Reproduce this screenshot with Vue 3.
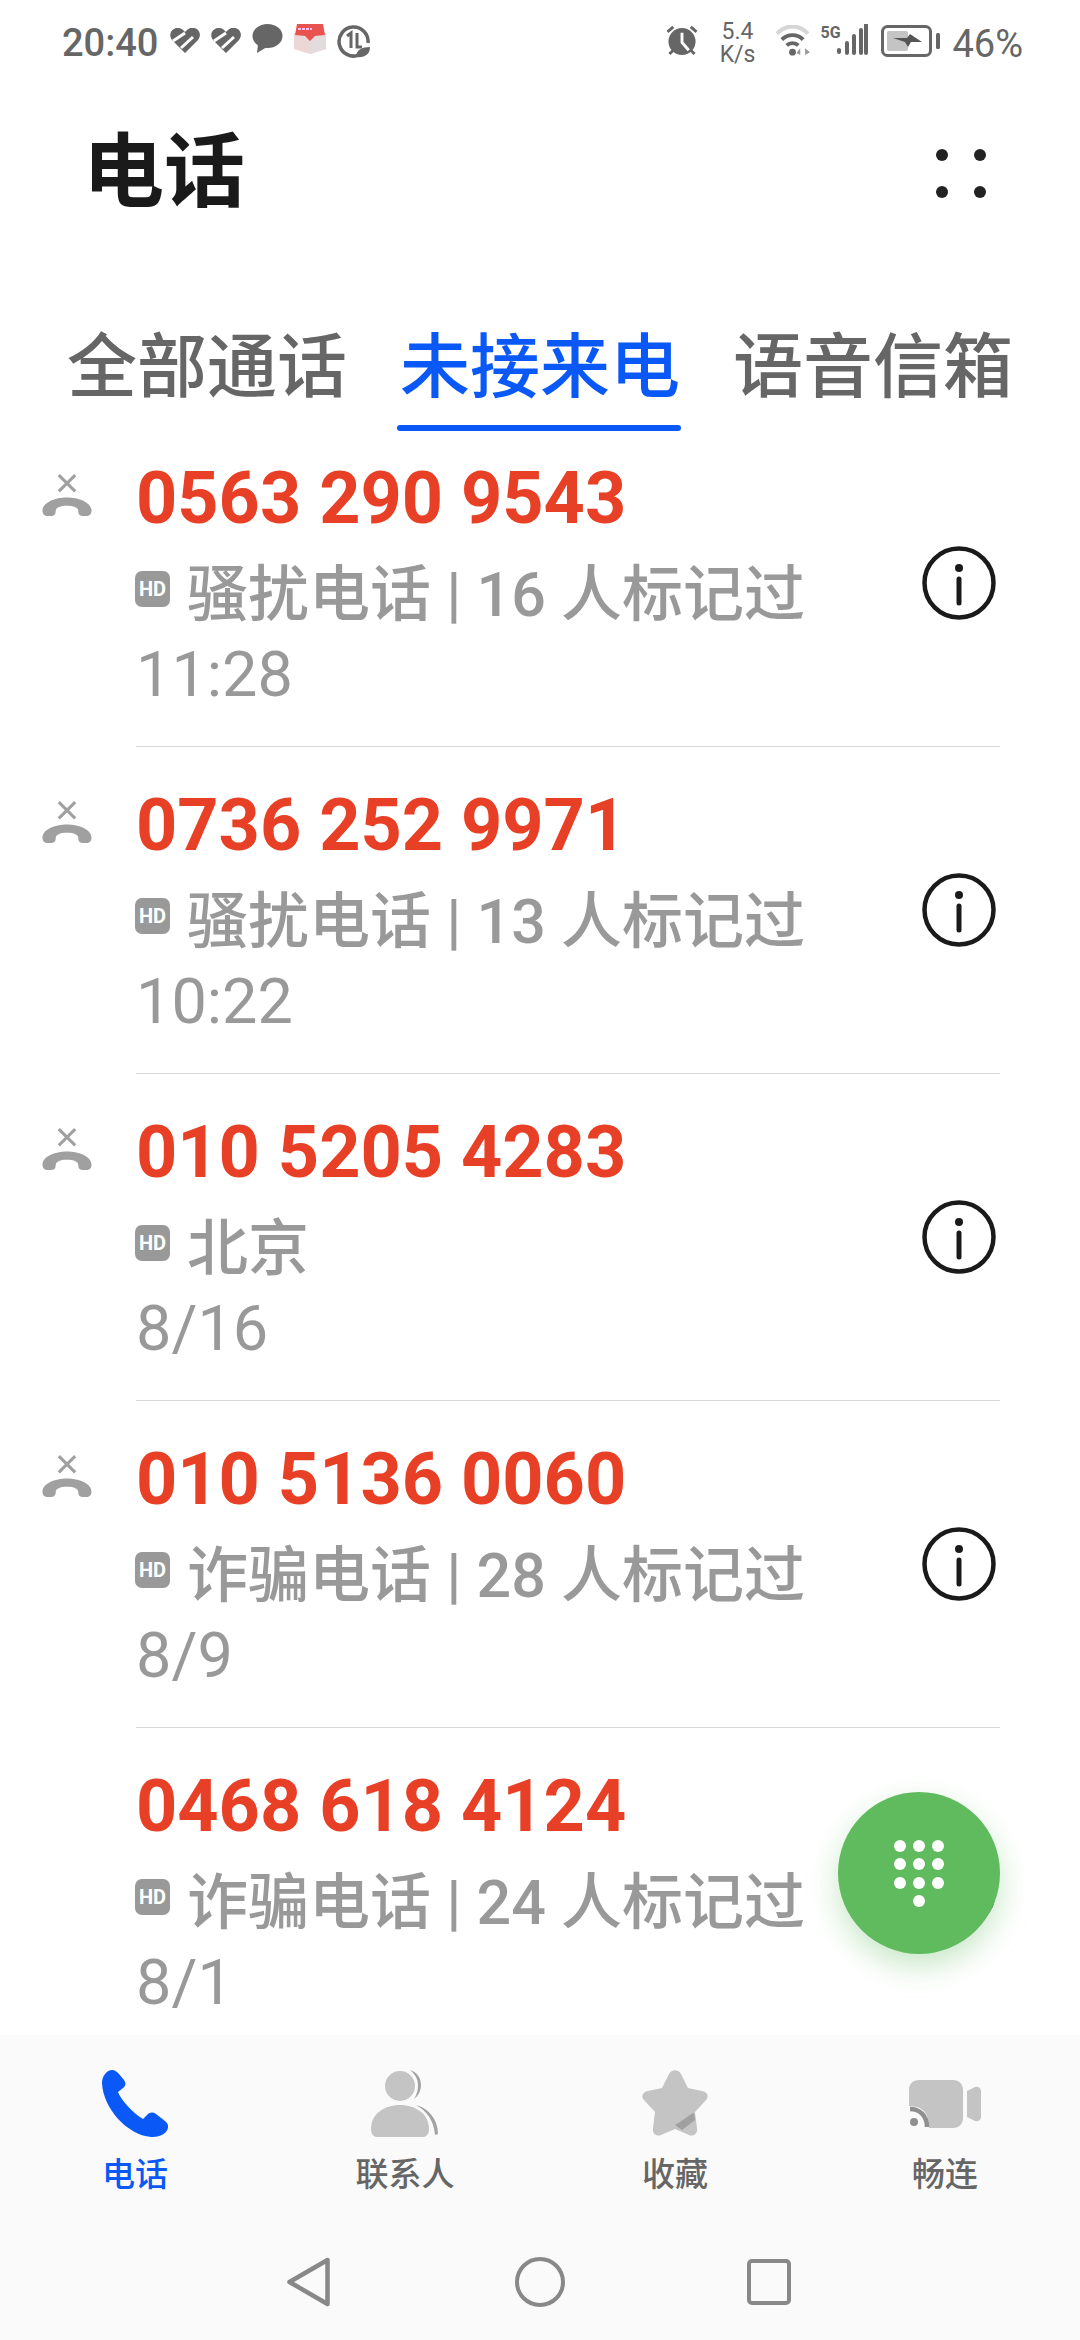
<script setup>
const tabs = [
  { label: '全部通话' },
  { label: '未接来电', active: true },
  { label: '语音信箱' }
]

const calls = [
  { number: '0563 290 9543', tag: '骚扰电话 | 16 人标记过', time: '11:28', missed: true },
  { number: '0736 252 9971', tag: '骚扰电话 | 13 人标记过', time: '10:22', missed: true },
  { number: '010 5205 4283', tag: '北京', time: '8/16', missed: true },
  { number: '010 5136 0060', tag: '诈骗电话 | 28 人标记过', time: '8/9', missed: true },
  { number: '0468 618 4124', tag: '诈骗电话 | 24 人标记过', time: '8/1', missed: false }
]

const padDots = [
  [6, 6], [25, 6], [44, 6],
  [6, 24], [25, 24], [44, 24],
  [6, 43], [25, 43], [44, 43],
  [25, 61]
]
</script>

<template>
  <div class="page">
    <div class="status">
      <div class="status-left">
        <span class="clock">20:40</span>
        <svg class="s-heart" width="30" height="25" viewBox="0 0 30 25">
          <path d="M15 25 2 12C-1 8 0 3 4 1 7-1 11 0 13 2L15 4 17 2C20-1 25-1 28 2 31 6 30 9 28 12Z" fill="#666" />
          <path d="M3 13 15 5M11 20 23 9" stroke="#fff" stroke-width="3" fill="none" />
        </svg>
        <svg class="s-heart" width="30" height="25" viewBox="0 0 30 25">
          <path d="M15 25 2 12C-1 8 0 3 4 1 7-1 11 0 13 2L15 4 17 2C20-1 25-1 28 2 31 6 30 9 28 12Z" fill="#666" />
          <path d="M3 13 15 5M11 20 23 9" stroke="#fff" stroke-width="3" fill="none" />
        </svg>
        <svg width="31" height="29" viewBox="0 0 31 29">
          <ellipse cx="15.5" cy="12" rx="15" ry="12" fill="#666" />
          <path d="M6 20 5 29 15 23Z" fill="#666" />
        </svg>
        <svg width="32" height="30" viewBox="0 0 32 30">
          <path d="M0 9 16 14 32 9V25L16 30 0 25Z" fill="#ecd6d6" />
          <path d="M16 14 32 9V25L16 30Z" fill="#e2dcdc" />
          <path d="M3 0H29L31 11 21 12 16 17 11 12 1 11Z" fill="#e8534f" />
          <path d="M4 5H18" stroke="#fbe" stroke-width="2" stroke-dasharray="3 1" />
        </svg>
        <svg width="33" height="34" viewBox="0 0 33 34">
          <path d="M22 31A14.5 14.5 0 1 1 31 19" fill="none" stroke="#666" stroke-width="3.5" />
          <path d="M10 12 14 9V24M20 9V23H25" fill="none" stroke="#666" stroke-width="3" />
          <path d="M19 33C19 26 25 23 33 23 33 30 28 34 19 33Z" fill="#666" />
        </svg>
      </div>
      <div class="status-right">
        <svg class="s-alarm" width="34" height="31" viewBox="0 0 34 32">
          <circle cx="17" cy="17" r="14" fill="#666" />
          <path d="M17 8V18L24 26" fill="none" stroke="#fff" stroke-width="3" />
          <path d="M2 7 8 2M32 7 26 2M4 30 8 26M30 30 26 26" stroke="#666" stroke-width="3" fill="none" />
        </svg>
        <div class="speed"><span>5.4</span><span>K/s</span></div>
        <svg class="s-wifi" width="37" height="31" viewBox="0 0 36 32">
          <path d="M2 9C11-1 25-1 34 9" fill="none" stroke="#d6d6d6" stroke-width="4" />
          <path d="M7 15C13 9 23 9 29 15M12 21C15 18 21 18 24 21" fill="none" stroke="#666" stroke-width="4" />
          <circle cx="18" cy="28" r="3.5" fill="#666" />
          <path d="M26 24 26 31 22 29ZM31 24 31 31 36 28Z" fill="#999" />
        </svg>
        <div class="signal">
          <span class="fiveg">5G</span>
          <svg width="32" height="31" viewBox="0 0 32 31">
            <path d="M3 26V28M11 19V29M18 12V29M25 6V29M30 1V29" stroke="#666" stroke-width="4" stroke-linecap="round" fill="none" />
          </svg>
        </div>
        <svg class="s-battery" width="59" height="32" viewBox="0 0 59 32">
          <rect x="1.5" y="1.5" width="48" height="29" rx="5" fill="none" stroke="#666" stroke-width="3" />
          <rect x="6" y="6" width="21" height="20" rx="2" fill="#c4c4c4" />
          <path d="M12 13H26L29 9 41 17H30L27 22 24 17Z" fill="#555" />
          <rect x="55" y="8" width="4" height="16" rx="1.5" fill="#666" />
        </svg>
        <span class="percent">46%</span>
      </div>
    </div>

    <div class="header">
      <h1 class="title">电话</h1>
      <div class="more">
        <i></i><i></i><i></i><i></i>
      </div>
    </div>

    <div class="tabs">
      <div v-for="tab in tabs" :key="tab.label" class="tab" :class="{ active: tab.active }">
        {{ tab.label }}
      </div>
    </div>

    <div class="list">
      <div v-for="call in calls" :key="call.number" class="row">
        <div class="missed">
          <svg v-if="call.missed" width="52" height="45" viewBox="0 0 50 44">
            <path d="M17 2 33 18M33 2 17 18" stroke="#a0a0a0" stroke-width="3" fill="none" />
            <path d="M1 37C1 29 13 24 25 24 37 24 49 29 49 37 49 40 47 42 45 42H40C37 42 36 40 36 37 36 34 32 32 25 32 18 32 14 34 14 37 14 40 13 42 10 42H5C3 42 1 40 1 37Z" fill="#a0a0a0" />
          </svg>
        </div>
        <div class="row-main">
          <div class="row-text">
            <div class="number">{{ call.number }}</div>
            <div class="tag">
              <span class="hd">HD</span>
              <span>{{ call.tag }}</span>
            </div>
            <div class="time">{{ call.time }}</div>
          </div>
          <svg class="info" width="80" height="80" viewBox="0 0 80 80">
            <circle cx="40" cy="40" r="34.5" fill="none" stroke="#1a1a1a" stroke-width="4.5" />
            <circle cx="40" cy="25" r="4" fill="#1a1a1a" />
            <path d="M40 36V60" stroke="#1a1a1a" stroke-width="5" stroke-linecap="round" />
          </svg>
        </div>
      </div>
    </div>

    <div class="fab">
      <svg width="50" height="67" viewBox="0 0 50 67">
        <circle v-for="(d, i) in padDots" :key="i" :cx="d[0]" :cy="d[1]" r="6" fill="#fff" />
      </svg>
    </div>

    <div class="bottom">
      <div class="nav">
        <div class="nav-item active">
          <svg width="66" height="67" viewBox="0 0 66 67">
            <path d="M0 13C0 6 5 0 10 0 13 0 15 2 17 4L22 10C24 13 24 16 21 18L16 22C19 30 31 43 41 49L45 45C48 42 51 42 54 44L63 51C67 54 67 58 64 62 60 66 55 67 49 67 25 65 1 38 0 13Z" fill="#0a59f7" />
          </svg>
          <span>电话</span>
        </div>
        <div class="nav-item">
          <svg width="68" height="67" viewBox="0 0 68 67">
            <path d="M39 0C46 2 50 8 50 15 50 21 47 26 43 29 46 24 47 20 47 15 47 9 44 4 39 0ZM45 35C57 38 67 49 67 64L64 65C63 51 56 41 45 35Z" fill="#a3a3a3" />
            <circle cx="29" cy="16" r="15" fill="#c4c4c4" />
            <path d="M0 59C0 44 13 35 29 35 45 35 58 44 58 59 58 63 56 67 52 67H6C2 67 0 63 0 59Z" fill="#c4c4c4" />
          </svg>
          <span>联系人</span>
        </div>
        <div class="nav-item">
          <svg width="66" height="67" viewBox="0 0 66 67">
            <path d="M27 4C30-1 36-1 39 4L46 18 60 21C66 22 67 27 64 30L53 42 55 58C56 64 51 67 47 65L33 59 19 65C15 67 10 64 11 58L13 42 2 30C-1 27 0 22 6 21L20 18Z" fill="#c4c4c4" />
            <path d="M33 55C42 50 48 44 52 43L53 50 40 60Z" fill="#a0a0a0" />
          </svg>
          <span>收藏</span>
        </div>
        <div class="nav-item">
          <svg class="nav-video" width="74" height="48" viewBox="0 0 72 48">
            <path d="M10 0H44C50 0 54 4 54 10V38C54 44 50 48 44 48H20C20 32 14 27 0 26V10C0 4 4 0 10 0Z" fill="#c4c4c4" />
            <path d="M58 11 66 7C69 6 72 8 72 11V37C72 40 69 42 66 41L58 37Z" fill="#c4c4c4" />
            <circle cx="5" cy="42" r="4" fill="#8f8f8f" />
            <path d="M1 29C11 29 18 36 18 47" fill="none" stroke="#8f8f8f" stroke-width="4.5" />
          </svg>
          <span>畅连</span>
        </div>
      </div>
      <div class="keys">
        <svg class="key-back" width="45" height="50" viewBox="0 0 44 50">
          <path d="M41 3V47L3 25Z" fill="none" stroke="#888" stroke-width="4.5" stroke-linejoin="round" />
        </svg>
        <svg class="key-home" width="50" height="50" viewBox="0 0 50 50">
          <circle cx="25" cy="25" r="23" fill="none" stroke="#888" stroke-width="4" />
        </svg>
        <svg class="key-recent" width="44" height="46" viewBox="0 0 44 46">
          <rect x="2" y="2" width="40" height="42" rx="3" fill="none" stroke="#888" stroke-width="4" />
        </svg>
      </div>
    </div>
  </div>
</template>

<style>
html,
body {
  margin: 0;
  background: #fff;
}
</style>

<style scoped>
.page {
  position: relative;
  width: 1080px;
  height: 2340px;
  display: flex;
  flex-direction: column;
  overflow: hidden;
  background: #fff;
  font-family: Roboto, "Noto Sans CJK SC", sans-serif;
}

.status {
  height: 80px;
  flex: none;
  display: flex;
  justify-content: space-between;
  padding: 24px 57px 0 62px;
  box-sizing: border-box;
  color: #666;
}

.status-left {
  display: flex;
  align-items: flex-start;
  gap: 11px;
}

.clock {
  font-size: 38px;
  line-height: 36px;
  margin: 1px 1px 0 0;
  font-weight: 500;
}

.s-heart {
  margin-top: 4px;
}

.status-right {
  display: flex;
  align-items: flex-start;
}

.s-alarm {
  margin: 1px 21px 0 0;
}

.speed {
  display: flex;
  flex-direction: column;
  align-items: center;
  font-size: 23px;
  line-height: 23px;
  margin: -4px 19px 0 0;
}

.s-wifi {
  margin: 1px 9px 0 0;
}

.signal {
  display: flex;
  align-items: flex-start;
  margin-right: 13px;
}

.fiveg {
  font-size: 16px;
  line-height: 18px;
  font-weight: 700;
  width: 16px;
}

.s-battery {
  margin: 1px 12px 0 0;
}

.percent {
  font-size: 38px;
  line-height: 36px;
  margin-top: 2px;
}

.header {
  height: 180px;
  flex: none;
  display: flex;
  align-items: center;
  justify-content: space-between;
  padding: 0 94px 0 83px;
  margin-top: 3px;
  box-sizing: border-box;
}

.title {
  margin: 0;
  font-size: 81px;
  line-height: 100px;
  font-weight: 700;
  color: #1a1a1a;
}

.more {
  width: 50px;
  display: grid;
  grid-template-columns: 12px 12px;
  justify-content: space-between;
  row-gap: 25px;
}

.more i {
  width: 12px;
  height: 12px;
  border-radius: 50%;
  background: #222;
}

.tabs {
  height: 157px;
  flex: none;
  display: flex;
  align-items: center;
  padding: 52px 0 0 67px;
  gap: 53px;
  box-sizing: border-box;
}

.tab {
  position: relative;
  font-size: 70px;
  line-height: 90px;
  font-weight: 500;
  color: #666;
}

.tab.active {
  color: #0a59f7;
}

.tab.active::after {
  content: "";
  position: absolute;
  left: -3px;
  right: -1px;
  bottom: -18px;
  height: 6px;
  border-radius: 3px;
  background: #0a59f7;
}

.list {
  flex: 1;
  min-height: 0;
  overflow: hidden;
}

.row {
  display: flex;
  height: 327px;
}

.missed {
  width: 137px;
  flex: none;
  display: flex;
  justify-content: center;
  box-sizing: border-box;
  padding: 53px 4px 0 0;
  margin-right: -1px;
}

.row-main {
  width: 864px;
  display: flex;
  align-items: center;
  justify-content: space-between;
  border-bottom: 1px solid #d8d8d8;
  box-sizing: border-box;
}

.row:last-child .row-main {
  border-bottom: none;
}

.row-text {
  align-self: flex-start;
  padding-top: 39px;
}

.number {
  font-size: 72px;
  line-height: 80px;
  font-weight: 700;
  color: #e84026;
}

.tag {
  display: flex;
  align-items: center;
  height: 100px;
  font-size: 61px;
  font-weight: 500;
  color: #999;
  white-space: nowrap;
}

.hd {
  width: 35px;
  height: 36px;
  margin: 0 17px 0 -1px;
  display: flex;
  align-items: center;
  justify-content: center;
  border-radius: 7px;
  background: #999;
  color: #fff;
  font-size: 20px;
  font-weight: 700;
}

.time {
  font-size: 63px;
  line-height: 72px;
  color: #999;
}

.info {
  margin-right: 1px;
}

.fab {
  position: absolute;
  left: 838px;
  top: 1792px;
  width: 162px;
  height: 162px;
  border-radius: 50%;
  background: #60bb5e;
  box-shadow: 0 12px 30px rgba(96, 187, 94, 0.35);
  display: flex;
  align-items: center;
  justify-content: center;
}

.bottom {
  height: 305px;
  flex: none;
  background: #fafafa;
}

.nav {
  display: grid;
  grid-template-columns: repeat(4, 1fr);
  padding-top: 35px;
}

.nav-item {
  display: flex;
  flex-direction: column;
  align-items: center;
  color: #666;
  font-size: 33px;
  font-weight: 500;
}

.nav-item svg {
  height: 67px;
  display: block;
  overflow: visible;
}

.nav-item .nav-video {
  height: 48px;
  margin: 10px 0 9px;
}

.nav-item span {
  margin-top: 18px;
  line-height: 40px;
}

.nav-item.active {
  color: #0a59f7;
}

.keys {
  display: flex;
  align-items: center;
  height: 60px;
  margin-top: 57px;
  padding-left: 286px;
}

.key-back {
  margin-right: 184px;
}

.key-home {
  margin-right: 182px;
}
</style>
